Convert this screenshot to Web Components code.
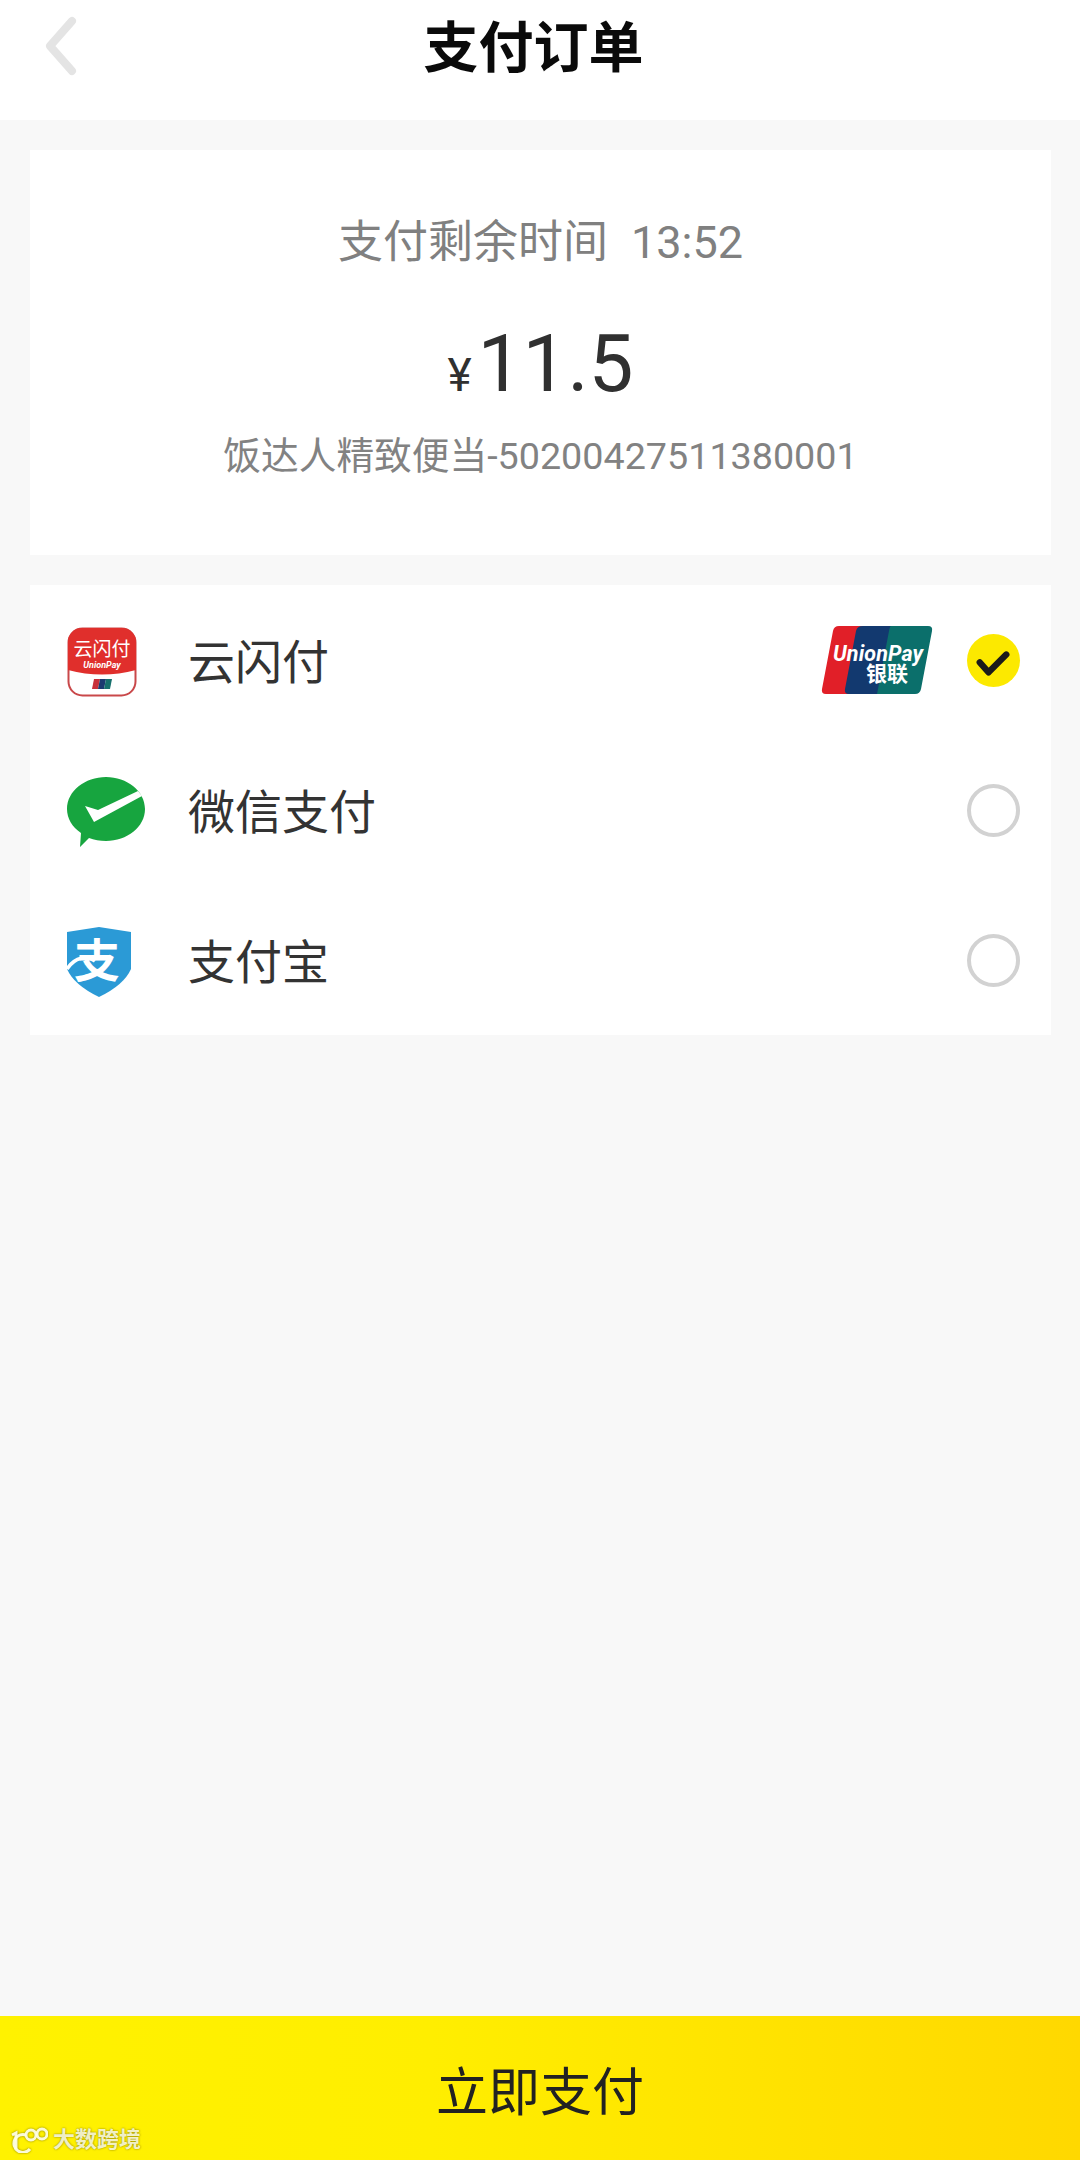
<!DOCTYPE html>
<html lang="zh-CN">
<head>
<meta charset="utf-8">
<title>支付订单</title>
<style>
  html, body { margin: 0; padding: 0; }
  body { font-family: Roboto, "Noto Sans CJK SC", sans-serif; background: #f8f8f8; }
  pay-page { width: 1080px; height: 2160px; }
</style>
</head>
<body>
<template id="t-page">
  <style>
    :host { display: flex; flex-direction: column; position: relative; background: #f8f8f8; overflow: hidden; }
    .content { flex: 1; display: flex; flex-direction: column; gap: 30px; padding: 30px 29px 0 30px; }
  </style>
  <slot name="header"></slot>
  <div class="content"><slot></slot></div>
  <slot name="footer"></slot>
</template>

<template id="t-header">
  <style>
    :host { display: flex; align-items: center; justify-content: center; position: relative; height: 120px; padding-right: 13px; background: #fff; }
    h1 { margin: 0 0 24px; font-size: 55px; line-height: 68px; font-weight: 700; color: #0a0a0a; }
    svg { position: absolute; left: 41px; top: 15px; }
  </style>
  <svg width="44" height="62" viewBox="0 0 44 62"><path d="M31 6 L9 31 L31 56" fill="none" stroke="#e4e4e4" stroke-width="8" stroke-linecap="round" stroke-linejoin="round"/></svg>
  <h1><slot></slot></h1>
</template>

<template id="t-summary">
  <style>
    :host { display: block; height: 405px; box-sizing: border-box; padding-top: 68px; background: #fff; text-align: center; }
    .time { font-size: 45px; line-height: 50px; color: #808080; }
    .time span { margin-left: 23px; }
    .price { margin-top: 46px; height: 100px; line-height: 100px; color: #303030; font-size: 80px; }
    .price small { font-size: 46px; margin-right: 6px; }
    .order { margin-top: 17px; font-size: 37.7px; line-height: 50px; color: #828282; }
  </style>
  <div class="time"><slot name="label"></slot><span><slot name="time"></slot></span></div>
  <div class="price"><small>¥</small><slot name="price"></slot></div>
  <div class="order"><slot name="order"></slot></div>
</template>

<template id="t-list">
  <style>:host { display: block; background: #fff; }</style>
  <slot></slot>
</template>

<template id="t-method">
  <style>
    :host { display: flex; align-items: center; height: 150px; padding: 0 31px 0 37px; font-size: 47px; color: #333; }
    .icon { width: 81px; margin-right: 2px; display: flex; padding-top: 3px; }
    .name { flex: 1; margin-left: 38px; padding-bottom: 3px; }
    .extra { display: flex; margin-right: 34px; }
    .radio { width: 53px; height: 53px; box-sizing: border-box; border: 4px solid #d2d2d2; border-radius: 50%; }
    :host([selected]) .radio { border: 0; background: #fce900; }
    .radio svg { display: none; }
    :host([selected]) .radio svg { display: block; }
  </style>
  <div class="icon"><slot name="icon"></slot></div>
  <div class="name"><slot></slot></div>
  <div class="extra"><slot name="extra"></slot></div>
  <div class="radio"><svg width="53" height="53" viewBox="0 0 54 54"><path d="M13 29 L22 39 L40 21" fill="none" stroke="#1a1a1a" stroke-width="6.5" stroke-linecap="round" stroke-linejoin="round"/></svg></div>
</template>

<template id="t-button">
  <style>
    :host { display: flex; align-items: center; justify-content: center; height: 144px; background: linear-gradient(90deg, #fff200 0%, #ffee00 40%, #ffd800 100%); font-size: 52px; color: #222; }
  </style>
  <slot></slot>
</template>

<template id="t-mark">
  <style>
    :host { position: absolute; left: 10px; bottom: 7px; display: flex; align-items: center; gap: 5px; color: rgba(255,255,225,.88); font-size: 22px; font-weight: 700; line-height: 26px; text-shadow: 0 0 2px rgba(110,100,0,.9); }
    svg { filter: drop-shadow(0 0 1px rgba(110,100,0,.8)); }
  </style>
  <svg width="38" height="26" viewBox="0 0 38 26" fill="none" stroke="rgba(255,255,225,.95)" stroke-width="3">
    <path d="M2 8 L6 6 V22"/>
    <path d="M16 8 A9 9 0 1 0 20 22"/>
    <circle cx="21" cy="8" r="5"/>
    <circle cx="32" cy="7" r="5"/>
  </svg>
  <span><slot></slot></span>
</template>

<pay-page>
  <pay-header slot="header">支付订单</pay-header>
  <pay-summary>
    <span slot="label">支付剩余时间</span>
    <span slot="time">13:52</span>
    <span slot="price">11.5</span>
    <span slot="order">饭达人精致便当-50200427511380001</span>
  </pay-summary>
  <pay-list>
    <pay-method selected>
      <svg slot="icon" width="70" height="70" viewBox="0 0 70 70">
        <rect x="1.5" y="1.5" width="67" height="67" rx="14" fill="#fff" stroke="#c9484a" stroke-width="2"/>
        <path d="M1 15 A14 14 0 0 1 15 1 H55 A14 14 0 0 1 69 15 V43 Q35 52 1 43 Z" fill="#e02f2c"/>
        <text x="35" y="29" text-anchor="middle" font-size="19" fill="#fff" font-family="Noto Sans CJK SC, sans-serif">云闪付</text>
        <text x="35" y="41" text-anchor="middle" font-size="9" font-weight="700" font-style="italic" fill="#fff" font-family="Roboto, sans-serif">UnionPay</text>
        <path d="M27 52 H33 L31 62 H25 Z" fill="#c8303a"/>
        <path d="M33 52 H39 L37 62 H31 Z" fill="#1b3a70"/>
        <path d="M39 52 H45 L43 62 H37 Z" fill="#16706c"/>
      </svg>
      云闪付
      <svg slot="extra" width="112" height="70" viewBox="0 0 112 70">
        <path d="M18 1 H46 Q50 1 49 5 L38 65 Q37 69 33 69 H5 Q0 69 1 64 L12 6 Q13 1 18 1 Z" fill="#e11f28"/>
        <path d="M42 1 H76 L62 69 H28 Q23 69 24 64 L35 6 Q36 1 42 1 Z" fill="#12396f"/>
        <path d="M70 1 H107 Q112 1 111 6 L100 64 Q99 69 94 69 H56 L57 64 L68 6 Q69 1 70 1 Z" fill="#0b6f6b"/>
        <text x="12" y="36" font-size="21.5" font-weight="700" font-style="italic" fill="#fff" font-family="Roboto, sans-serif" textLength="90">UnionPay</text>
        <text x="45" y="56" font-size="21" font-weight="700" fill="#fff" font-family="Noto Sans CJK SC, sans-serif">银联</text>
      </svg>
    </pay-method>
    <pay-method>
      <svg slot="icon" width="78" height="70" viewBox="0 0 78 70">
        <path d="M39 0 C60 0 78 14 78 32 C78 50 60 64 39 64 C33 64 27 63 22 61 L13 70 L14 56 C5 50 0 41 0 32 C0 14 18 0 39 0 Z" fill="#17a53f"/>
        <path d="M18 29 L31 33 L71 14 L75 19 L27 45 Z" fill="#fff"/>
      </svg>
      微信支付
    </pay-method>
    <pay-method>
      <svg slot="icon" width="64" height="78" viewBox="0 -4 64 78">
        <path d="M32 0 L64 5 V42 Q57 58 32 70 Q7 58 0 42 V5 Z" fill="#2b9ad6"/>
        <text x="30" y="50" text-anchor="middle" font-size="46" font-weight="700" fill="#fff" font-family="Noto Sans CJK SC, sans-serif">支</text>
        <path d="M0 42 C8 30 20 28 28 34" fill="none" stroke="#fff" stroke-width="3.5"/>
      </svg>
      支付宝
    </pay-method>
  </pay-list>
  <pay-button slot="footer">立即支付</pay-button>
  <pay-mark slot="footer">大数跨境</pay-mark>
</pay-page>

<script>
  const make = (tag, tpl) => customElements.define(tag, class extends HTMLElement {
    constructor() {
      super();
      this.attachShadow({ mode: 'open' }).appendChild(document.getElementById(tpl).content.cloneNode(true));
    }
  });
  make('pay-page', 't-page');
  make('pay-header', 't-header');
  make('pay-summary', 't-summary');
  make('pay-list', 't-list');
  make('pay-method', 't-method');
  make('pay-button', 't-button');
  make('pay-mark', 't-mark');
</script>
</body>
</html>
